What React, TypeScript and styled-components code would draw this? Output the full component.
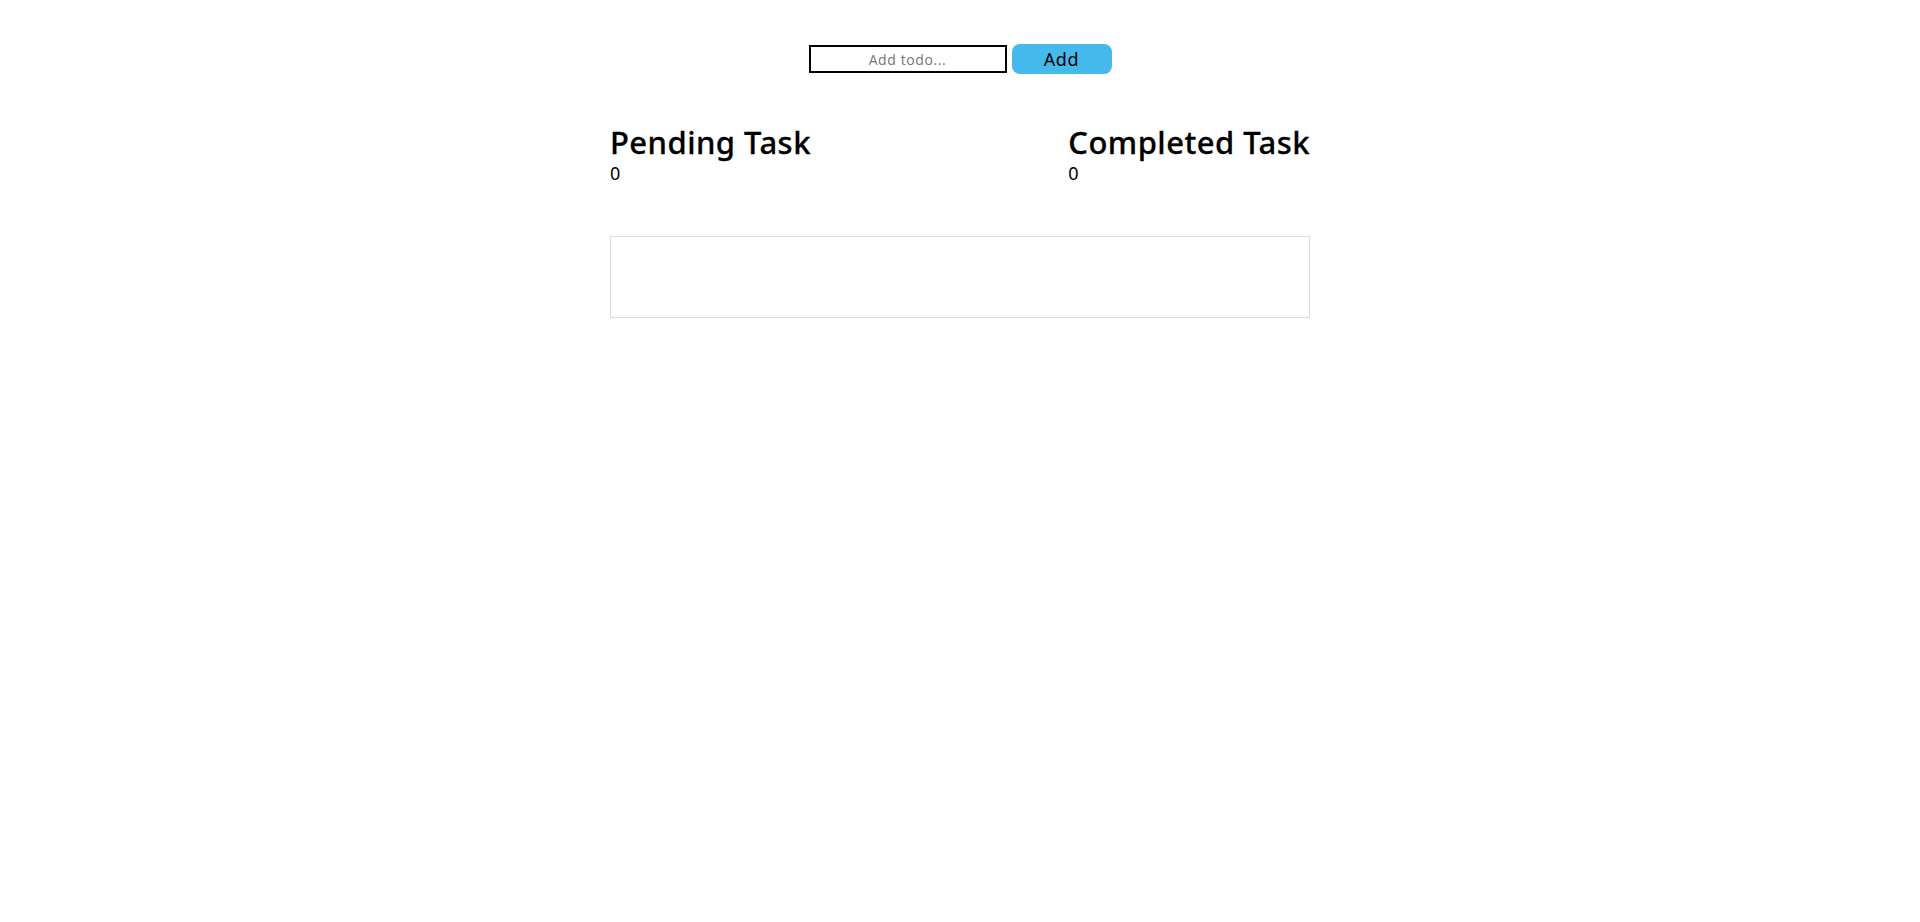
import React, { useState } from 'react';
import styled, { createGlobalStyle } from 'styled-components';

const GlobalStyle = createGlobalStyle`
  body {
    margin: 0;
    background: #fff;
    font-family: "Noto Sans", "Open Sans", sans-serif;
    color: #000;
  }
`;

const Page = styled.div`
  width: 700px;
  margin: 0 auto;
  padding-top: 44px;
`;

const AddForm = styled.form`
  display: flex;
  justify-content: center;
  align-items: center;
  gap: 5px;
`;

const TodoInput = styled.input`
  width: 198px;
  height: 28px;
  box-sizing: border-box;
  border: 2px solid #000;
  padding: 0 6px;
  text-align: center;
  font-family: "Open Sans", sans-serif;
  font-size: 14px;
  letter-spacing: 0.6px;
  outline: none;

  &::placeholder {
    color: #757575;
  }
`;

const AddButton = styled.button`
  width: 100px;
  height: 30px;
  border: none;
  border-radius: 8px;
  background-color: #45b8ec;
  color: #000;
  font-family: "Noto Sans", sans-serif;
  font-size: 18px;
  letter-spacing: 0.6px;
  cursor: pointer;
`;

const Stats = styled.div`
  display: flex;
  justify-content: space-between;
  margin-top: 48px;
`;

const StatBlock = styled.div`
  display: flex;
  flex-direction: column;
`;

const StatTitle = styled.h2`
  margin: 0;
  font-size: 31px;
  line-height: 40px;
  font-weight: 500;
  letter-spacing: 0.45px;
  -webkit-text-stroke: 0.3px #000;
`;

const StatCount = styled.span`
  font-size: 18px;
  line-height: 22px;
`;

const TodoList = styled.ul`
  list-style: none;
  margin: 52px 0 0;
  padding: 0;
  height: 82px;
  box-sizing: border-box;
  border: 1px solid #dcdcdc;
`;

export default function App() {
  const [text, setText] = useState('');
  const [todos, setTodos] = useState<{ id: number; text: string; done: boolean }[]>([]);

  const handleAdd = (e: React.FormEvent) => {
    e.preventDefault();
    if (!text.trim()) return;
    setTodos([...todos, { id: Date.now(), text, done: false }]);
    setText('');
  };

  const pending = todos.filter((t) => !t.done).length;
  const completed = todos.filter((t) => t.done).length;

  return (
    <>
      <GlobalStyle />
      <Page>
        <AddForm onSubmit={handleAdd}>
          <TodoInput
            type="text"
            placeholder="Add todo..."
            value={text}
            onChange={(e) => setText(e.target.value)}
          />
          <AddButton type="submit">Add</AddButton>
        </AddForm>

        <Stats>
          <StatBlock>
            <StatTitle>Pending Task</StatTitle>
            <StatCount>{pending}</StatCount>
          </StatBlock>
          <StatBlock>
            <StatTitle>Completed Task</StatTitle>
            <StatCount>{completed}</StatCount>
          </StatBlock>
        </Stats>

        <TodoList>
          {todos.map((t) => (
            <li key={t.id}>{t.text}</li>
          ))}
        </TodoList>
      </Page>
    </>
  );
}
